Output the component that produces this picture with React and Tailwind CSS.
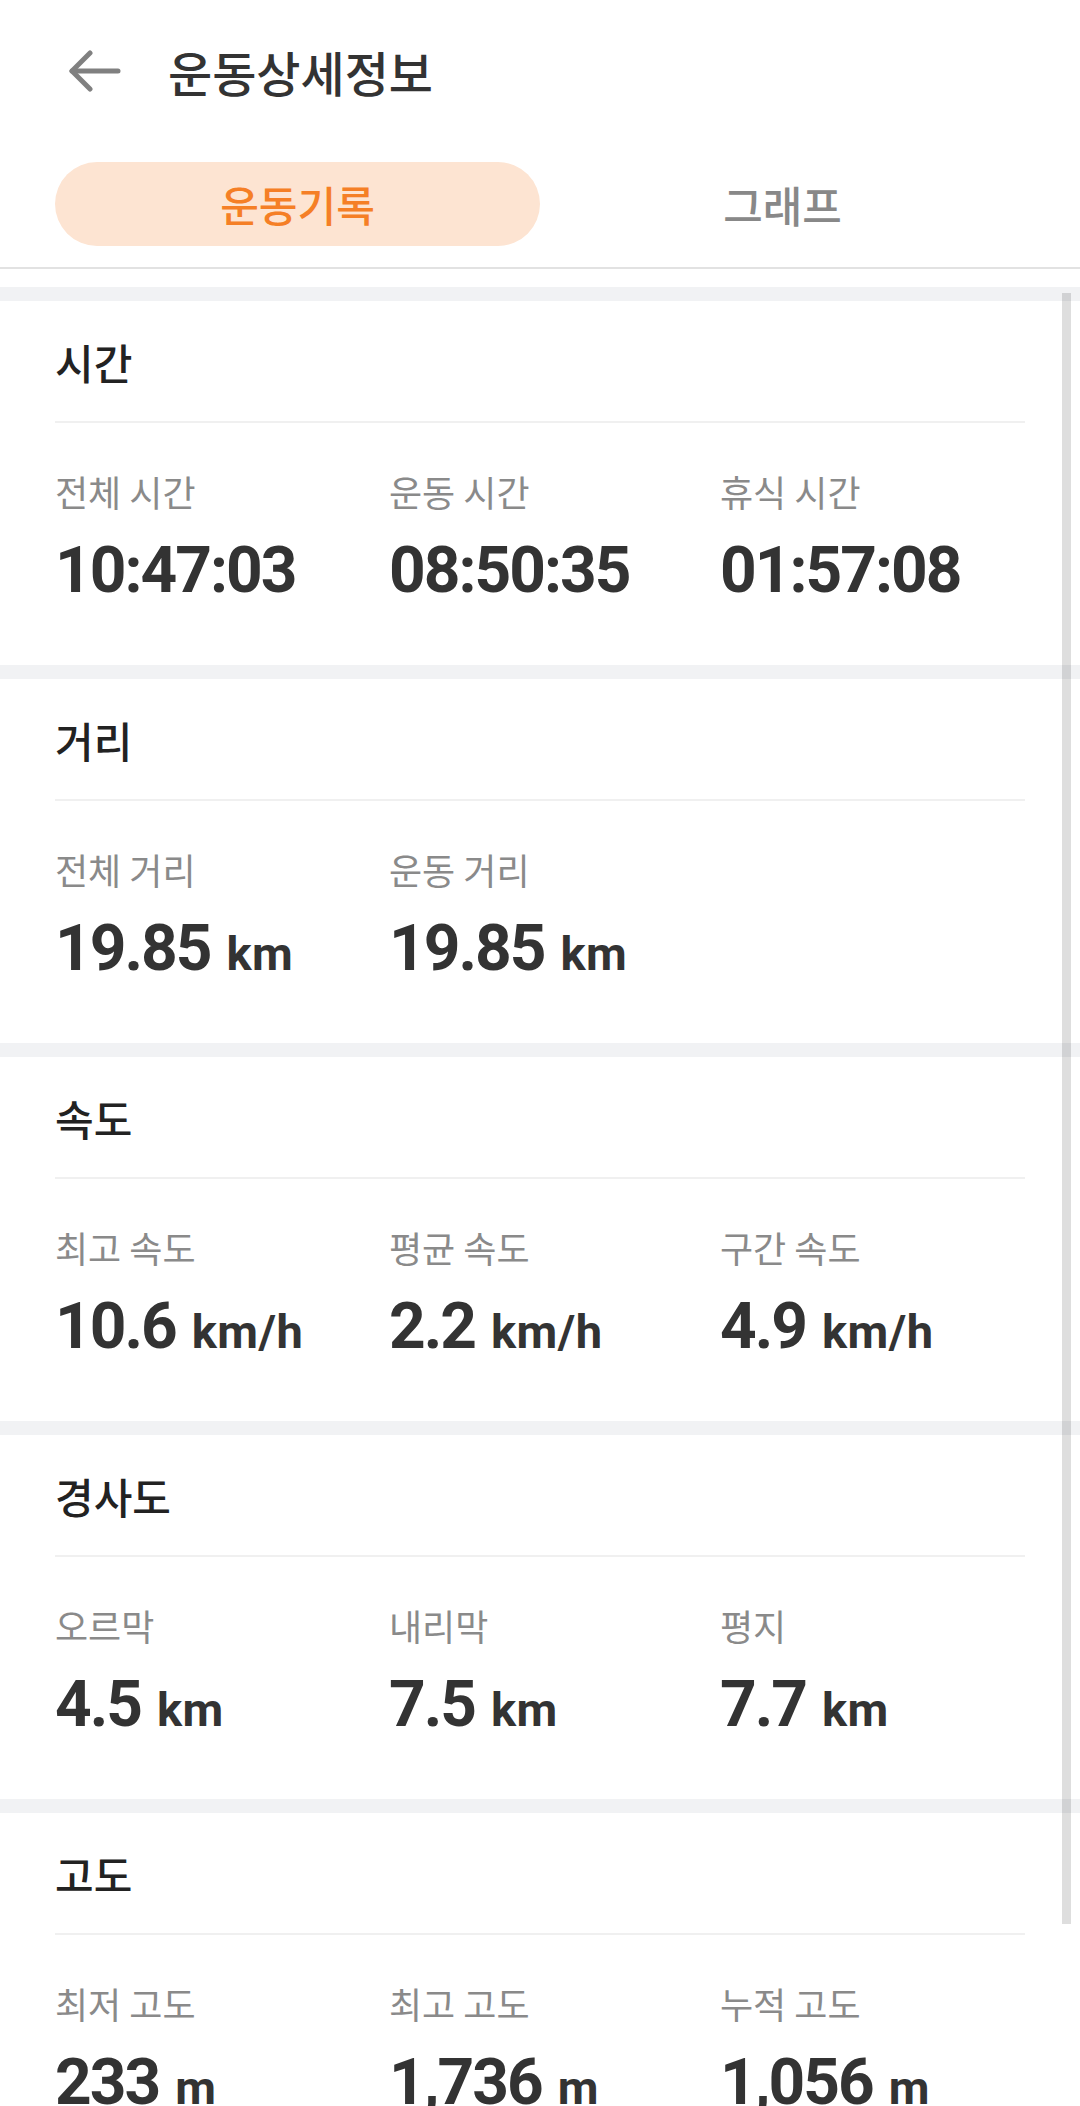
import React from "react";

const kr = { fontFamily: '"Noto Sans CJK KR", "Noto Sans", sans-serif' };
const num = { fontFamily: 'Roboto, "Noto Sans CJK KR", sans-serif' };

const sections = [
  {
    title: "시간",
    items: [
      { label: "전체 시간", value: "10:47:03" },
      { label: "운동 시간", value: "08:50:35" },
      { label: "휴식 시간", value: "01:57:08" },
    ],
  },
  {
    title: "거리",
    items: [
      { label: "전체 거리", value: "19.85", unit: "km" },
      { label: "운동 거리", value: "19.85", unit: "km" },
    ],
  },
  {
    title: "속도",
    items: [
      { label: "최고 속도", value: "10.6", unit: "km/h" },
      { label: "평균 속도", value: "2.2", unit: "km/h" },
      { label: "구간 속도", value: "4.9", unit: "km/h" },
    ],
  },
  {
    title: "경사도",
    items: [
      { label: "오르막", value: "4.5", unit: "km" },
      { label: "내리막", value: "7.5", unit: "km" },
      { label: "평지", value: "7.7", unit: "km" },
    ],
  },
  {
    title: "고도",
    items: [
      { label: "최저 고도", value: "233", unit: "m" },
      { label: "최고 고도", value: "1,736", unit: "m" },
      { label: "누적 고도", value: "1,056", unit: "m" },
    ],
  },
];

function Section({ s }) {
  return (
    <div className="bg-white h-[364px] shrink-0">
      <div className="h-[120px] px-[55px] flex items-center pt-[2px]">
        <span className="text-[42px] font-medium text-[#222222] leading-none" style={kr}>
          {s.title}
        </span>
      </div>
      <div className="mx-[55px] h-[2px] bg-[#f0f0f0]" />
      <div className="mt-[48px] px-[55px] grid grid-cols-[334px_331px_1fr]">
        {s.items.map((it) => (
          <div key={it.label} className="flex flex-col">
            <div className="h-[40px] leading-[40px] text-[36px] text-[#8a8a8a] whitespace-nowrap" style={kr}>
              {it.label}
            </div>
            <div className="mt-[30px] h-[60px] leading-[60px] whitespace-nowrap text-[#333333] font-bold" style={num}>
              <span className="text-[64px] tracking-[-2px]">{it.value}</span>
              {it.unit && <span className="text-[47px] ml-[16px] tracking-[0.5px]">{it.unit}</span>}
            </div>
          </div>
        ))}
      </div>
    </div>
  );
}

export default function App() {
  return (
    <div className="w-[1080px] h-[2106px] bg-white relative overflow-hidden">
      <div className="h-[142px] flex items-center pl-[69px] gap-[47px]">
        <svg width="52" height="42" viewBox="0 0 52 42" fill="none" stroke="#808080" strokeWidth="5" strokeLinecap="round" strokeLinejoin="round">
          <path d="M3 21 H49" />
          <path d="M21 3 L3 21 L21 39" />
        </svg>
        <span className="text-[48px] font-medium text-[#333333] leading-none" style={kr}>
          운동상세정보
        </span>
      </div>
      <div className="mt-[20px] px-[55px] flex h-[84px]">
        <div className="flex-1 rounded-full bg-[#fde4d2] flex items-center justify-center">
          <span className="text-[42px] font-medium text-[#f57f26] leading-none" style={kr}>운동기록</span>
        </div>
        <div className="flex-1 flex items-center justify-center">
          <span className="text-[43px] font-medium text-[#888888] leading-none" style={kr}>그래프</span>
        </div>
      </div>
      <div className="mt-[21px] h-[2px] bg-[#e2e2e2]" />
      <div className="mt-[18px] bg-[#f1f2f4] pt-[14px] flex flex-col gap-[14px]">
        {sections.map((s) => (
          <Section key={s.title} s={s} />
        ))}
      </div>
      <div className="absolute right-[9px] top-[293px] w-[9px] h-[1631px] bg-black/[0.13]" />
    </div>
  );
}
